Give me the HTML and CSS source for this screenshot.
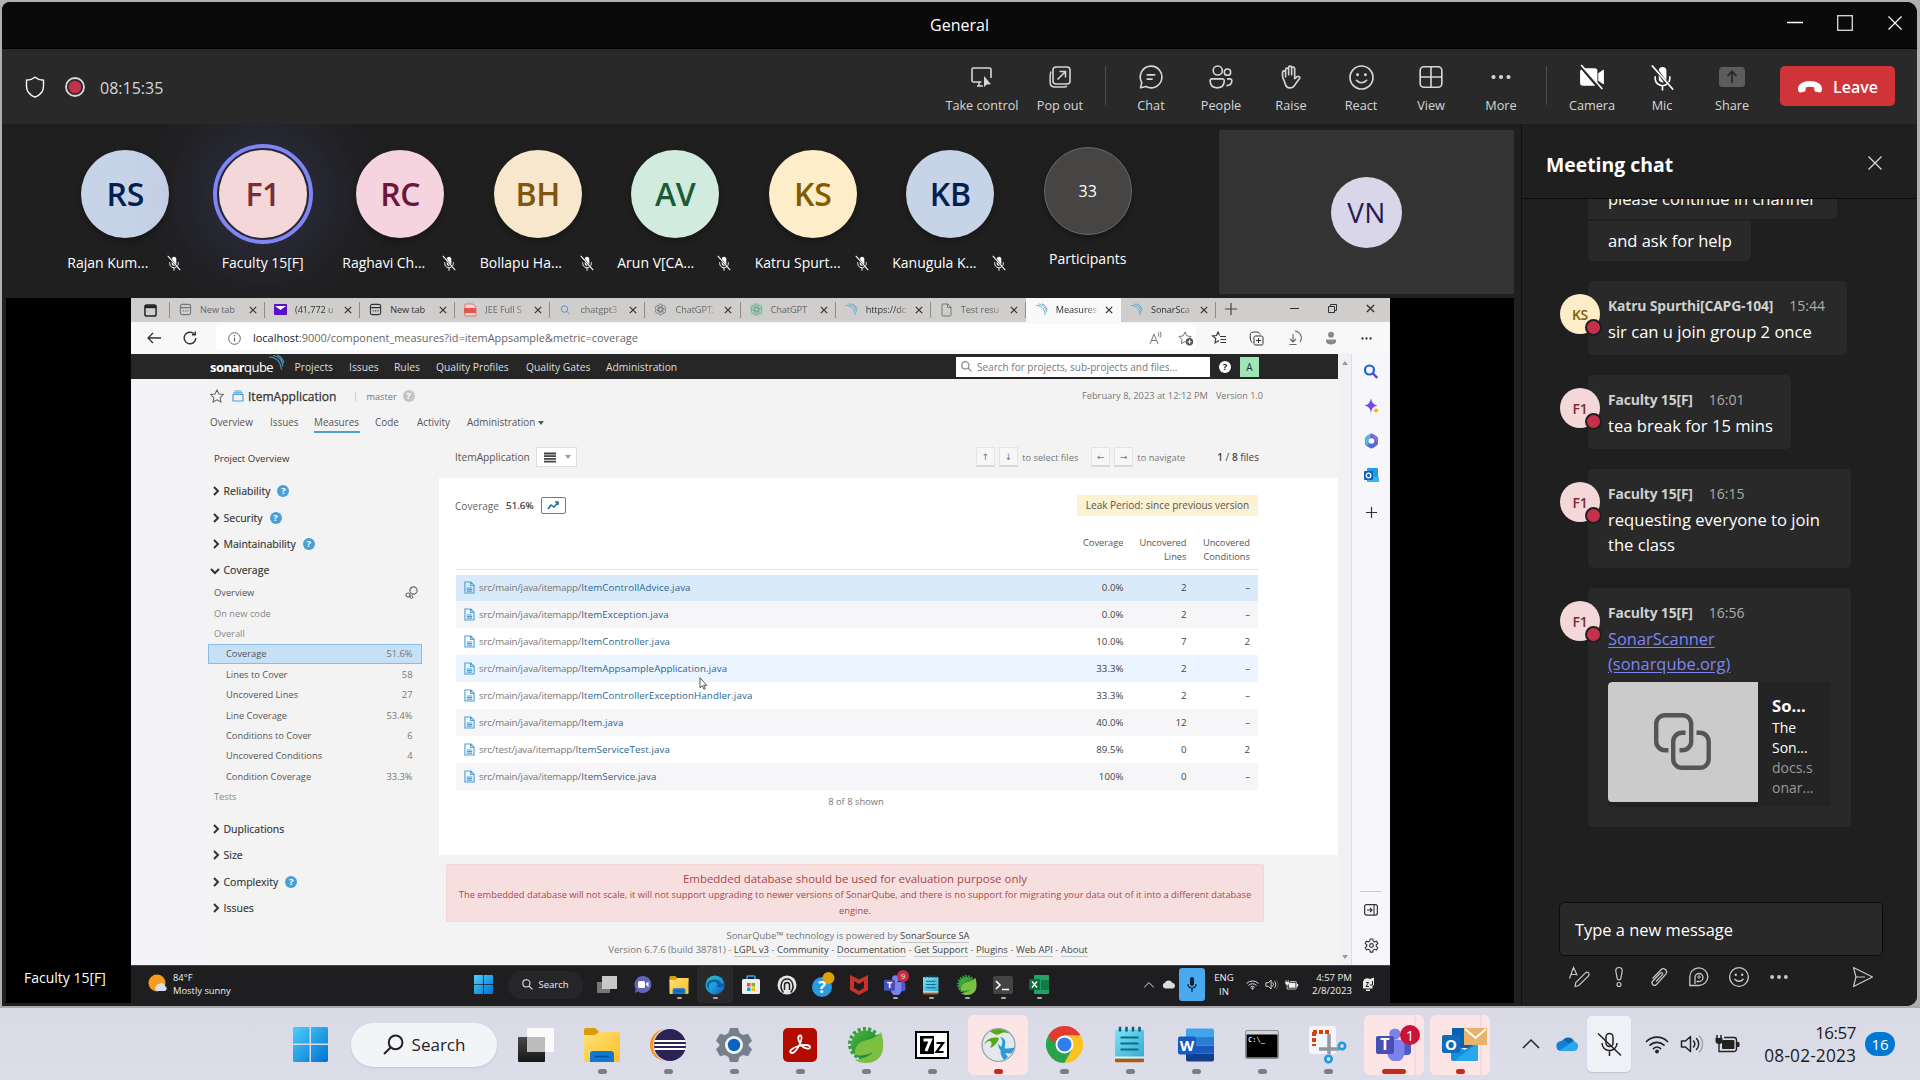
FILE: index.html
```html
<!DOCTYPE html>
<html lang="en">
<head>
<meta charset="utf-8">
<title>General</title>
<link rel="stylesheet" href="styles.css">
</head>
<body>
<svg class="defs" aria-hidden="true">
  <defs>
    <linearGradient id="gWin" x1="0" y1="0" x2="1" y2="1"><stop offset="0" stop-color="#4cd0fb"/><stop offset="1" stop-color="#0070d0"/></linearGradient>
    <linearGradient id="gFold" x1="0" y1="0" x2="1" y2="1"><stop offset="0" stop-color="#ffe07a"/><stop offset="1" stop-color="#fcbf23"/></linearGradient>
    <linearGradient id="gEdge" x1="0" y1="0" x2="1" y2="1"><stop offset="0" stop-color="#37c5a8"/><stop offset=".5" stop-color="#1b9de2"/><stop offset="1" stop-color="#1358b0"/></linearGradient>
    <linearGradient id="gLeaf" x1="0" y1="0" x2="1" y2="1"><stop offset="0" stop-color="#4fb53a"/><stop offset="1" stop-color="#0a7a36"/></linearGradient>
    <linearGradient id="gPad" x1="0" y1="0" x2="1" y2="1"><stop offset="0" stop-color="#7be3f7"/><stop offset="1" stop-color="#35a9cc"/></linearGradient>
    <linearGradient id="gStar" x1="0" y1="0" x2="1" y2="1"><stop offset="0" stop-color="#3d5cf0"/><stop offset="1" stop-color="#a23df0"/></linearGradient>
  </defs>
  <symbol id="i-mic-off" viewBox="0 0 20 20"><path d="M7.2 4.6a2.9 2.9 0 0 1 5.7 0v6.2c0 .5-.1.9-.3 1.2z" fill="currentColor"/><path d="M7.2 8.3v2.6a2.9 2.9 0 0 0 3.7 2.7z" fill="currentColor"/><path d="M4.6 9.5v1.2a5.4 5.4 0 0 0 8.4 4.4M15.4 9.5v1.2c0 .9-.2 1.7-.6 2.4M10 16.2v3" fill="none" stroke="currentColor" stroke-width="1.2" stroke-linecap="round"/><path d="M2.5 1.5l15 17" stroke="currentColor" stroke-width="1.3" stroke-linecap="round"/></symbol>
  <symbol id="i-x" viewBox="0 0 16 16"><path d="M1.5 1.5l13 13M14.5 1.5l-13 13" fill="none" stroke="currentColor" stroke-width="1.2"/></symbol>
  <symbol id="i-cx" viewBox="0 0 8 8"><path d="M.8 .8l6.4 6.4M7.2 .8L.8 7.2" fill="none" stroke="currentColor" stroke-width="1.2"/></symbol>
  <symbol id="i-chev" viewBox="0 0 10 10"><path d="M3 1l4 4-4 4" fill="none" stroke="currentColor" stroke-width="2"/></symbol>
  <symbol id="i-up" viewBox="0 0 20 20"><path d="M2 14l8-8 8 8" fill="none" stroke="currentColor" stroke-width="1.5"/></symbol>
  <symbol id="i-file" viewBox="0 0 12 14"><path d="M1 1h6.5L11 4.5V13H1zM7.2 1v3.8H11M3 7.5h6M3 9.3h6M3 11.1h6" fill="none" stroke="#4b9fd5" stroke-width="1.2"/></symbol>
  <symbol id="i-wave" viewBox="0 0 14 14"><path d="M1 2.5c6 .3 9.5 4 10 10.5M4 1c5 1 8 4.500 8.300 9M7.500 .8c3 1.200 5 3.500 5.500 6.500" fill="none" stroke="#4b9fd5" stroke-width=".9"/></symbol>
  <symbol id="i-page" viewBox="0 0 14 14"><rect x="1.500" y="1.500" width="11" height="11" rx="2" fill="none" stroke="currentColor" stroke-width="1.200"/><path d="M1.500 5h11M4 8.500h1.200M6.500 8.500h1.200M9 8.500h1.200" stroke="currentColor" stroke-width="1.200" fill="none"/></symbol>
  <symbol id="i-gpt" viewBox="0 0 16 16"><g fill="none" stroke="currentColor" stroke-width="1"><path d="M5 4.200v4.500l4 2.300M5 4.200a3 3 0 0 1 5.500-1.600"/><path d="M5 4.200v4.500l4 2.300M5 4.200a3 3 0 0 1 5.500-1.600" transform="rotate(60 8 8)"/><path d="M5 4.200v4.500l4 2.300M5 4.200a3 3 0 0 1 5.500-1.600" transform="rotate(120 8 8)"/><path d="M5 4.200v4.500l4 2.300M5 4.200a3 3 0 0 1 5.500-1.600" transform="rotate(180 8 8)"/><path d="M5 4.200v4.500l4 2.300M5 4.200a3 3 0 0 1 5.500-1.600" transform="rotate(240 8 8)"/><path d="M5 4.200v4.500l4 2.300M5 4.200a3 3 0 0 1 5.500-1.600" transform="rotate(300 8 8)"/></g></symbol>
  <symbol id="i-wifi" viewBox="0 0 24 20"><g fill="none" stroke="currentColor" stroke-width="1.700" stroke-linecap="round"><path d="M1.500 7.500a15 15 0 0 1 21 0"/><path d="M5 11.200a10 10 0 0 1 14 0"/><path d="M8.500 14.600a5 5 0 0 1 7 0"/></g><circle cx="12" cy="17.500" r="1.900" fill="currentColor"/></symbol>
  <symbol id="i-spk" viewBox="0 0 24 20"><path d="M1.500 7v6h4l5 4.500v-15L5.500 7z" fill="none" stroke="currentColor" stroke-width="1.500" stroke-linejoin="round"/><path d="M13.500 7a4.500 4.500 0 0 1 0 6M16.500 4.500a8 8 0 0 1 0 11" fill="none" stroke="currentColor" stroke-width="1.500" stroke-linecap="round"/><path d="M19.500 2a12 12 0 0 1 0 16" fill="none" stroke="currentColor" stroke-width="1.400" stroke-linecap="round" opacity=".3"/></symbol>
  <symbol id="i-bat" viewBox="0 0 26 20"><path d="M2 1v3M6 1v3" stroke="currentColor" stroke-width="1.500"/><path d="M.5 4h7v2.500a3.500 3.500 0 0 1-7 0z" fill="currentColor"/><path d="M4 9v8.500h15a2.500 2.500 0 0 0 2.500-2.500V6A2.500 2.500 0 0 0 19 3.500H9" fill="none" stroke="currentColor" stroke-width="1.400"/><rect x="7" y="6" width="12.500" height="9" rx="1" fill="currentColor"/><path d="M22 8h1.500a1 1 0 0 1 1 1v3a1 1 0 0 1-1 1H22z" fill="currentColor"/></symbol>
  <symbol id="i-cloud" viewBox="0 0 24 16"><path d="M6 15a5 5 0 0 1-1-9.800A7 7 0 0 1 17.500 5 5.200 5.200 0 0 1 19 15z" fill="currentColor"/></symbol>
  <symbol id="i-win" viewBox="0 0 36 36"><path d="M0 1.500A1.500 1.500 0 0 1 1.500 0H17v17H0zM18.500 0h16A1.500 1.500 0 0 1 36 1.500V17H18.500zM0 18.500h17V36H1.500A1.500 1.500 0 0 1 0 34.500zM18.500 18.500H36v16a1.500 1.500 0 0 1-1.500 1.500h-16z" fill="url(#gWin)"/></symbol>
  <symbol id="i-find" viewBox="0 0 20 20"><circle cx="12" cy="8" r="6.500" fill="none" stroke="currentColor" stroke-width="1.900"/><path d="M7.200 12.800L1 19" stroke="currentColor" stroke-width="1.900"/></symbol>
  <symbol id="i-folder" viewBox="0 0 36 34"><path d="M0 2A2 2 0 0 1 2 0h9l4 4h19a2 2 0 0 1 2 2v5H0z" fill="#d99b09"/><path d="M0 7h11l4-3h21v28a2 2 0 0 1-2 2H2a2 2 0 0 1-2-2z" fill="url(#gFold)"/><path d="M6 34V26a3 3 0 0 1 3-3h18a3 3 0 0 1 3 3v8z" fill="#0f78d4"/><path d="M11 28.500h14" stroke="#0a4f96" stroke-width="1.500"/></symbol>
  <symbol id="i-spring" viewBox="0 0 36 36"><circle cx="17" cy="17" r="15" fill="none" stroke="#2f9f42" stroke-width="4" stroke-dasharray="3 2.240"/><circle cx="17.500" cy="18" r="14.500" fill="url(#gLeaf)"/><path d="M33 5c3.500 10 3 21-2 26-7 7-18 6-24 2 6-1 14-3 18-8-5 3-12 4-18 3-1-8 4-13 10-14.500C24 12 29 10 33 5z" fill="#7cc043"/></symbol>
  <symbol id="i-note" viewBox="0 0 30 36"><rect x="0" y="31" width="29" height="5" rx="1.500" fill="#b5560f"/><rect x="0" y="3" width="29" height="29" rx="2" fill="url(#gPad)"/><path d="M0 30h29v2H0z" fill="#fff" opacity=".8"/><path d="M5.500 11h18M5.500 17h18M5.500 23h18" stroke="#0c6b8e" stroke-width="2"/><path d="M5 0v5M11.500 0v5M18 0v5M24.500 0v5" stroke="#0c5a7c" stroke-width="2.500"/></symbol>
  <symbol id="i-teams" viewBox="0 0 38 34"><circle cx="20" cy="6" r="6" fill="#7b83eb"/><rect x="24" y="12" width="13" height="16" rx="4" fill="#5059c9"/><path d="M12 12h18v13a9 9 0 0 1-18 2z" fill="#7b83eb"/><rect x="0" y="8" width="19" height="19" rx="2" fill="#464eb8"/></symbol>
  <symbol id="i-smile" viewBox="0 0 24 24"><circle cx="12" cy="12" r="10.200" fill="none" stroke="currentColor" stroke-width="1.500"/><circle cx="8.500" cy="9.500" r="1.300" fill="currentColor"/><circle cx="15.500" cy="9.500" r="1.300" fill="currentColor"/><path d="M7.500 14.500c2.300 2.900 6.700 2.900 9 0" fill="none" stroke="currentColor" stroke-width="1.500" stroke-linecap="round"/></symbol>
  <symbol id="i-dots" viewBox="0 0 24 24"><circle cx="4.500" cy="12" r="2.100" fill="currentColor"/><circle cx="12" cy="12" r="2.100" fill="currentColor"/><circle cx="19.500" cy="12" r="2.100" fill="currentColor"/></symbol>
</svg>

<div class="window">
  <header class="titlebar">
    <span class="title">General</span>
    <div class="winbtns">
      <svg width="16" height="16"><path d="M0 7.500h16" stroke="#fff" stroke-width="1.300"/></svg>
      <svg width="16" height="16"><rect x=".7" y=".7" width="14.600" height="14.600" fill="none" stroke="#ddd" stroke-width="1.300"/></svg>
      <svg width="16" height="16"><use href="#i-x"/></svg>
    </div>
  </header>

  <div class="toolbar">
    <div class="status">
      <svg width="20" height="22" viewBox="0 0 20 22"><path d="M10 1.200c2.400 1.900 5 2.800 8.500 3v6c0 5-3 8.700-8.500 11-5.500-2.300-8.500-6-8.500-11v-6c3.500-.2 6.100-1.100 8.500-3z" fill="none" stroke="#fff" stroke-width="1.400"/></svg>
      <svg class="rec" width="20" height="20"><circle cx="10" cy="10" r="9" fill="none" stroke="#d8d8d8" stroke-width="1.800"/><circle cx="10" cy="10" r="6.300" fill="#c4314b"/></svg>
      <span class="timer">08:15:35</span>
    </div>
    <div class="actions">
      <div class="act take"><svg width="24" height="24" viewBox="0 0 24 24"><path d="M11.500 17H3.500A1.500 1.500 0 0 1 2 15.500v-11A1.500 1.500 0 0 1 3.500 3h16A1.500 1.500 0 0 1 21 4.500V13M7 21h6M9 17v4" fill="none" stroke="currentColor" stroke-width="1.600"/><path d="M14 11v11l2.800-2.600 4.200-.2z" fill="currentColor"/></svg><span>Take control</span></div>
      <div class="act pop"><svg width="24" height="24" viewBox="0 0 24 24"><rect x="5" y="2" width="17" height="17" rx="3" fill="none" stroke="currentColor" stroke-width="1.600"/><path d="M3 6.500C1.800 9 2 18 2.500 19.500s2 2.500 4 2.500h9.500c1.500 0 2.500-.5 3-1" fill="none" stroke="currentColor" stroke-width="1.500"/><path d="M9.500 14.500l8-8M11.500 6.500h6v6" fill="none" stroke="currentColor" stroke-width="1.600"/></svg><span>Pop out</span></div>
      <i class="sep"></i>
      <div class="act"><svg width="26" height="26" viewBox="0 0 24 24"><path d="M12 2a10 10 0 1 1-4.700 18.800L2.300 22l1.200-4.900A10 10 0 0 1 12 2z" fill="none" stroke="currentColor" stroke-width="1.500" stroke-linejoin="round"/><path d="M8.500 10h7M8.500 14h4.500" stroke="currentColor" stroke-width="1.500" stroke-linecap="round"/></svg><span>Chat</span></div>
      <div class="act"><svg width="26" height="26" viewBox="0 0 24 24"><g fill="none" stroke="currentColor" stroke-width="1.500"><circle cx="9" cy="6" r="4.200"/><circle cx="18" cy="7.500" r="2.900"/><path d="M2 15.500A1.800 1.800 0 0 1 3.800 13.700h9.400a1.800 1.800 0 0 1 1.800 1.800c0 4-2.500 6.500-6.500 6.500S2 19.500 2 15.500z"/><path d="M17.500 13.700h2.700a1.800 1.800 0 0 1 1.800 1.800c0 3-1.800 4.500-5 4.500"/></g></svg><span>People</span></div>
      <div class="act"><svg width="26" height="26" viewBox="0 0 24 24"><path d="M7 12.500V5.200a1.400 1.400 0 0 1 2.800 0V10 3.400a1.400 1.400 0 0 1 2.800 0V10 4.200a1.400 1.400 0 0 1 2.800 0v9.300l2.300-1.800c1.200-.8 2.800.3 2.400 1.300-.3.700-3 3.800-4 5.500-1.200 2.200-2.200 3.500-5.100 3.500-3 0-4-2-4.600-4.500C5.900 15.500 4.200 13 4.200 11V7.800a1.400 1.400 0 0 1 2.800 0" fill="none" stroke="currentColor" stroke-width="1.500" stroke-linejoin="round"/></svg><span>Raise</span></div>
      <div class="act"><svg width="27" height="27"><use href="#i-smile"/></svg><span>React</span></div>
      <div class="act"><svg width="26" height="26" viewBox="0 0 24 24"><rect x="2" y="2.500" width="20" height="19" rx="3.500" fill="none" stroke="currentColor" stroke-width="1.500"/><path d="M12 2.500v19M2 12h20" stroke="currentColor" stroke-width="1.500"/></svg><span>View</span></div>
      <div class="act"><svg width="24" height="24"><use href="#i-dots"/></svg><span>More</span></div>
      <i class="sep sep2"></i>
      <div class="act on"><svg width="26" height="26" viewBox="0 0 24 24"><path d="M5 4h9.500A2.500 2.500 0 0 1 17 6.500v11zM17.800 8.500L22 5.500c.5-.3 1 0 1 .5v12c0 .5-.5.8-1 .5l-4.200-3zM2.200 5l12.800 15H3.500A2.500 2.500 0 0 1 1 17.500v-11A2.500 2.500 0 0 1 2.200 5z" fill="currentColor"/><path d="M2 1l19.500 22" stroke="currentColor" stroke-width="1.500"/></svg><span>Camera</span></div>
      <div class="act on"><svg width="27" height="27"><use href="#i-mic-off"/></svg><span>Mic</span></div>
      <div class="act share"><svg width="26" height="22" viewBox="0 0 26 22"><rect x="0" y="1" width="26" height="20" rx="3.500" fill="#5c5c5c"/><path d="M13 17V5.500M8.500 10L13 5.500l4.500 4.500" fill="none" stroke="#292929" stroke-width="1.800"/></svg><span>Share</span></div>
      <div class="leave"><svg width="24" height="12" viewBox="0 0 24 12"><path d="M12 0C5 0 0 3.500 0 7.500 0 10 .8 11.500 2.500 11.500l3.500-.8c1.200-.3 1.500-1 1.600-2L8 6.300c2.500-.8 5.500-.8 8 0l.4 2.400c.1 1 .4 1.700 1.600 2l3.500.8C23.200 11.500 24 10 24 7.500 24 3.500 19 0 12 0z" fill="#fff"/></svg><b>Leave</b></div>
    </div>
  </div>

  <div class="content">
    <main class="left">
      <div class="roster">
        <div class="person"><div class="av blue">RS</div><div class="nm"><span>Rajan Kum...</span><svg width="16" height="18"><use href="#i-mic-off"/></svg></div></div>
        <div class="person speaking"><div class="av rose">F1</div><div class="nm"><span>Faculty 15[F]</span></div></div>
        <div class="person"><div class="av pink">RC</div><div class="nm"><span>Raghavi Ch...</span><svg width="16" height="18"><use href="#i-mic-off"/></svg></div></div>
        <div class="person"><div class="av sand">BH</div><div class="nm"><span>Bollapu Ha...</span><svg width="16" height="18"><use href="#i-mic-off"/></svg></div></div>
        <div class="person"><div class="av mint">AV</div><div class="nm"><span>Arun V[CA...</span><svg width="16" height="18"><use href="#i-mic-off"/></svg></div></div>
        <div class="person"><div class="av gold">KS</div><div class="nm"><span>Katru Spurt...</span><svg width="16" height="18"><use href="#i-mic-off"/></svg></div></div>
        <div class="person"><div class="av blue">KB</div><div class="nm"><span>Kanugula K...</span><svg width="16" height="18"><use href="#i-mic-off"/></svg></div></div>
        <div class="person more"><div class="av">33</div><div class="nm"><span>Participants</span></div></div>
        <div class="self"><div class="vn">VN</div></div>
      </div>

      <div class="stage">
        <div class="sharer">Faculty 15[F]</div>
        <div class="screen">
          <div class="tabs">
            <div class="tabmenu"><svg width="13" height="13" viewBox="0 0 14 14"><rect x="1" y="1" width="12" height="12" rx="2" fill="none" stroke="#222" stroke-width="1.600"/><path d="M1 3h12" stroke="#222" stroke-width="3"/></svg></div>
            <div class="tab dim"><svg width="13" height="13"><use href="#i-page"/></svg><span>New tab</span><svg class="cx" width="8" height="8"><use href="#i-cx"/></svg></div>
            <div class="tab"><svg width="13" height="13" viewBox="0 0 13 13"><rect y="1" width="13" height="11" rx="1" fill="#5a10c8"/><path d="M1 3l5.500 4L12 3" fill="#fff"/></svg><span class="fade">(41,772 u</span><svg class="cx" width="8" height="8"><use href="#i-cx"/></svg></div>
            <div class="tab"><svg width="13" height="13"><use href="#i-page"/></svg><span>New tab</span><svg class="cx" width="8" height="8"><use href="#i-cx"/></svg></div>
            <div class="tab dim"><svg width="13" height="14" viewBox="0 0 13 14"><path d="M1 1h8l3 3v9H1z" fill="#f6d4d0" stroke="#e0746c"/><rect x="0" y="5" width="12" height="5" fill="#e2574c"/></svg><span class="fade">JEE Full S</span><svg class="cx" width="8" height="8"><use href="#i-cx"/></svg></div>
            <div class="tab dim"><svg width="10" height="10" viewBox="0 0 20 20" class="bing"><g transform="matrix(-1 0 0 1 20 0)"><use href="#i-find"/></g></svg><span class="fade">chatgpt3</span><svg class="cx" width="8" height="8"><use href="#i-cx"/></svg></div>
            <div class="tab dim"><svg width="13" height="13"><use href="#i-gpt"/></svg><span class="fade">ChatGPT:</span><svg class="cx" width="8" height="8"><use href="#i-cx"/></svg></div>
            <div class="tab dim green"><svg width="13" height="13"><rect width="13" height="13" rx="2" fill="#b5cfc4"/><use href="#i-gpt"/></svg><span>ChatGPT</span><svg class="cx" width="8" height="8"><use href="#i-cx"/></svg></div>
            <div class="tab"><svg width="13" height="13"><use href="#i-wave"/></svg><span class="fade">https://dc</span><svg class="cx" width="8" height="8"><use href="#i-cx"/></svg></div>
            <div class="tab dim"><svg width="11" height="14" viewBox="0 0 11 14"><path d="M1 2a1 1 0 0 1 1-1h5l3 3v8a1 1 0 0 1-1 1H2a1 1 0 0 1-1-1zM6.500 1v3.500H10" fill="none" stroke="#777"/></svg><span class="fade">Test resu</span><svg class="cx" width="8" height="8"><use href="#i-cx"/></svg></div>
            <div class="tab active"><svg width="13" height="13"><use href="#i-wave"/></svg><span class="fade">Measures</span><svg class="cx" width="8" height="8"><use href="#i-cx"/></svg></div>
            <div class="tab last"><svg width="13" height="13"><use href="#i-wave"/></svg><span class="fade">SonarSca</span><svg class="cx" width="8" height="8"><use href="#i-cx"/></svg></div>
            <svg class="newtab" width="12" height="12"><path d="M6 0v12M0 6h12" stroke="#444" stroke-width="1.200"/></svg>
            <div class="bwin">
              <svg width="9" height="9"><path d="M0 4.500h9" stroke="#333"/></svg>
              <svg width="9" height="9"><path d="M.5 2.500h6v6h-6zM2.500 2V.5h6v6H7" fill="none" stroke="#333"/></svg>
              <svg width="9" height="9"><use href="#i-cx"/></svg>
            </div>
          </div>
          <div class="addr">
            <svg class="back" width="14" height="12" viewBox="0 0 14 12"><path d="M14 6H1M6 1L1 6l5 5" fill="none" stroke="#333" stroke-width="1.300"/></svg>
            <svg class="reload" width="14" height="14" viewBox="0 0 14 14"><path d="M12.800 7A5.800 5.800 0 1 1 11 2.800M12.300.5v3.300H9" fill="none" stroke="#333" stroke-width="1.400"/></svg>
            <div class="url"><svg width="13" height="13" viewBox="0 0 13 13"><circle cx="6.500" cy="6.500" r="5.800" fill="none" stroke="#666"/><path d="M6.500 5.500v4M6.500 3v1.300" stroke="#666" stroke-width="1.200"/></svg><span><b>localhost</b>:9000/component_measures?id=itemAppsample&amp;metric=coverage</span>
              <svg class="read" width="14" height="14" viewBox="0 0 14 14"><path d="M1 13L5 3l4 10M2.500 9.500h5M9 1.500a3 3 0 0 1 0 4M11 .5a5 5 0 0 1 0 6" fill="none" stroke="#777"/></svg>
              <svg width="16" height="15" viewBox="0 0 16 15"><path d="M7 1l1.800 3.900 4.200.6-3 3 .7 4.200L7 10.700l-3.700 2 .7-4.200-3-3 4.200-.6z" fill="none" stroke="#777"/><circle cx="11.500" cy="10.800" r="3.700" fill="#555"/><path d="M11.500 8.800v4M9.500 10.800h4" stroke="#fff"/></svg>
            </div>
            <div class="tools">
              <svg width="15" height="14" viewBox="0 0 15 14"><path d="M8 9.500L4 12l.8-4.500L1.500 5l4-.5L7 1l1.500 3.500M9 5.500h6M9.500 8.500H15M9.500 11.500H15" fill="none" stroke="#333" stroke-width="1.100"/></svg>
              <svg width="15" height="15" viewBox="0 0 15 15"><rect x="5" y="5" width="9" height="9" rx="1.500" fill="none" stroke="#333"/><path d="M9.500 7v5M7 9.500h5M3 11.500C.8 10 1 4 1.500 2.500S6 .8 8 1s2.500.8 3 2.500" fill="none" stroke="#333"/></svg>
              <svg width="16" height="16" viewBox="0 0 16 16"><path d="M6 4v8M3 9l3 3 3-3M2.500 14.500h7M8 1a7 7 0 0 1 5 11" fill="none" stroke="#666" stroke-width="1.100"/></svg>
              <svg width="12" height="14" viewBox="0 0 12 14"><circle cx="6" cy="3.800" r="3" fill="#8a8a8a"/><path d="M1 8.500h10v2c0 4-10 4-10 0z" fill="#8a8a8a"/></svg>
              <svg width="13" height="13"><use href="#i-dots"/></svg>
            </div>
          </div>
          <div class="browser">
            <div class="page">
              <nav class="snav">
                <div class="logo"><b>sonar</b>qube<svg width="17" height="17"><use href="#i-wave"/></svg></div>
                <a class="n1">Projects</a><a class="n2">Issues</a><a class="n3">Rules</a><a class="n4">Quality Profiles</a><a class="n5">Quality Gates</a><a>Administration</a>
                <div class="find"><svg width="11" height="11" viewBox="0 0 20 20"><g transform="matrix(-1 0 0 1 20 0)"><use href="#i-find"/></g></svg>Search for projects, sub-projects and files...</div>
                <i class="q w">?</i><i class="usr">A</i>
              </nav>
              <div class="phead">
                <div class="prow">
                  <svg width="14" height="14" viewBox="0 0 16 16"><path d="M8 1l2.200 4.600 5 .7-3.600 3.500.9 5L8 12.400l-4.500 2.400.9-5L.8 6.300l5-.7z" fill="none" stroke="#666" stroke-width="1.200"/></svg>
                  <svg class="pic" width="12" height="12" viewBox="0 0 12 12"><path d="M1 4.500h10v6.500H1zM1.500 2.800h9M2.500 1h7" fill="none" stroke="#4b9fd5" stroke-width="1.200"/></svg>
                  <b class="pname">ItemApplication</b><i class="br"></i><span class="master">master</span><i class="q g">?</i>
                  <span class="date">February 8, 2023 at 12:12 PM</span><span class="ver">Version 1.0</span>
                </div>
                <div class="ptabs"><a class="t1">Overview</a><a class="t2">Issues</a><a class="t3 cur">Measures</a><a class="t4">Code</a><a class="t5">Activity</a><a>Administration<i class="car"></i></a></div>
              </div>
              <div class="cols">
                <aside class="side">
                  <div class="po">Project Overview</div>
                  <div class="facet"><svg width="10" height="10"><use href="#i-chev"/></svg>Reliability<i class="q">?</i></div>
                  <div class="facet"><svg width="10" height="10"><use href="#i-chev"/></svg>Security<i class="q">?</i></div>
                  <div class="facet"><svg width="10" height="10"><use href="#i-chev"/></svg>Maintainability<i class="q">?</i></div>
                  <div class="facet open"><svg width="10" height="10"><use href="#i-chev"/></svg>Coverage</div>
                  <div class="it top">Overview<svg width="13" height="13" viewBox="0 0 13 13"><circle cx="8.500" cy="4.500" r="3.600" fill="none" stroke="#666" stroke-width="1.200"/><circle cx="3" cy="9" r="2" fill="none" stroke="#666" stroke-width="1.200"/><circle cx="6.500" cy="11" r="1.400" fill="none" stroke="#666"/></svg></div>
                  <div class="it gr">On new code</div>
                  <div class="it gr">Overall</div>
                  <div class="it sub sel">Coverage<span>51.6%</span></div>
                  <div class="it sub">Lines to Cover<span>58</span></div>
                  <div class="it sub">Uncovered Lines<span>27</span></div>
                  <div class="it sub">Line Coverage<span>53.4%</span></div>
                  <div class="it sub">Conditions to Cover<span>6</span></div>
                  <div class="it sub">Uncovered Conditions<span>4</span></div>
                  <div class="it sub">Condition Coverage<span>33.3%</span></div>
                  <div class="it gr last">Tests</div>
                  <div class="facet"><svg width="10" height="10"><use href="#i-chev"/></svg>Duplications</div>
                  <div class="facet"><svg width="10" height="10"><use href="#i-chev"/></svg>Size</div>
                  <div class="facet"><svg width="10" height="10"><use href="#i-chev"/></svg>Complexity<i class="q">?</i></div>
                  <div class="facet"><svg width="10" height="10"><use href="#i-chev"/></svg>Issues</div>
                </aside>
                <section class="main">
                  <div class="mbar"><span class="mname">ItemApplication</span><div class="dd"><svg width="12" height="11"><path d="M0 1.500h12M0 4.200h12M0 6.900h12M0 9.600h12" stroke="#444" stroke-width="1.800"/></svg><i class="car"></i></div>
                    <div class="keys"><kbd>↑</kbd><kbd>↓</kbd><span class="k1">to select files</span><kbd>←</kbd><kbd>→</kbd><span class="k2">to navigate</span><span class="cnt"><b>1</b> / <b>8</b> files</span></div></div>
                  <div class="panel">
                    <div class="prow1"><span>Coverage</span><b>51.6%</b><div class="gbtn"><svg width="12" height="9" viewBox="0 0 12 9"><path d="M1 8l3-4 3 2 4-4.500M8 1h3v3" fill="none" stroke="#236a97" stroke-width="1.500"/></svg></div><div class="leak">Leak Period: since previous version</div></div>
                    <div class="thead"><span></span><span>Coverage</span><span>Uncovered<br>Lines</span><span>Uncovered<br>Conditions</span></div>
                    <div class="rows">
                      <div class="r sel"><div><svg width="11" height="13"><use href="#i-file"/></svg><span>src/main/java/itemapp/<b>ItemControllAdvice.java</b></span></div><span>0.0%</span><span>2</span><span>–</span></div>
                      <div class="r alt"><div><svg width="11" height="13"><use href="#i-file"/></svg><span>src/main/java/itemapp/<b>ItemException.java</b></span></div><span>0.0%</span><span>2</span><span>–</span></div>
                      <div class="r"><div><svg width="11" height="13"><use href="#i-file"/></svg><span>src/main/java/itemapp/<b>ItemController.java</b></span></div><span>10.0%</span><span>7</span><span>2</span></div>
                      <div class="r hov"><div><svg width="11" height="13"><use href="#i-file"/></svg><span>src/main/java/itemapp/<b>ItemAppsampleApplication.java</b></span></div><span>33.3%</span><span>2</span><span>–</span>
                        <svg class="cursor" width="9" height="13" viewBox="0 0 9 13"><path d="M1 .8v10l2.300-2 1.700 3.500 1.300-.7-1.600-3.300h3z" fill="#fff" stroke="#444" stroke-width=".9"/></svg></div>
                      <div class="r"><div><svg width="11" height="13"><use href="#i-file"/></svg><span>src/main/java/itemapp/<b>ItemControllerExceptionHandler.java</b></span></div><span>33.3%</span><span>2</span><span>–</span></div>
                      <div class="r alt"><div><svg width="11" height="13"><use href="#i-file"/></svg><span>src/main/java/itemapp/<b>Item.java</b></span></div><span>40.0%</span><span>12</span><span>–</span></div>
                      <div class="r"><div><svg width="11" height="13"><use href="#i-file"/></svg><span>src/test/java/itemapp/<b>ItemServiceTest.java</b></span></div><span>89.5%</span><span>0</span><span>2</span></div>
                      <div class="r alt"><div><svg width="11" height="13"><use href="#i-file"/></svg><span>src/main/java/itemapp/<b>ItemService.java</b></span></div><span>100%</span><span>0</span><span>–</span></div>
                    </div>
                    <div class="shown">8 of 8 shown</div>
                  </div>
                  <div class="warn"><div class="w1">Embedded database should be used for evaluation purpose only</div><div>The embedded database will not scale, it will not support upgrading to newer versions of SonarQube, and there is no support for migrating your data out of it into a different database</div><div>engine.</div></div>
                  <div class="foot"><div>SonarQube™ technology is powered by <u>SonarSource SA</u></div><div class="f2">Version 6.7.6 (build 38781) - <u>LGPL v3</u> - <u>Community</u> - <u>Documentation</u> - <u>Get Support</u> - <u>Plugins</u> - <u>Web API</u> - <u>About</u></div></div>
                </section>
              </div>
            </div>
            <div class="scroll"><i class="su"></i><i class="sd"></i></div>
            <div class="rail">
              <svg width="14" height="15" viewBox="0 0 14 15"><circle cx="5.500" cy="6" r="4.500" fill="none" stroke="#1d62d8" stroke-width="2.200"/><path d="M9 9.500l4.300 4.500" stroke="#5b3fd8" stroke-width="2.400"/></svg>
              <svg width="15" height="16" viewBox="0 0 15 16"><path d="M7 0c.8 4.500 2 6.300 6.500 7.500C9 8.700 7.800 10.500 7 15 6.200 10.500 5 8.700.5 7.500 5 6.300 6.200 4.500 7 0z" fill="url(#gStar)"/><path d="M12 9.500l.9 2.100 2.100.9-2.100.9-.9 2.100-.9-2.100-2.100-.9 2.100-.9z" fill="#f6a800"/></svg>
              <svg width="15" height="16" viewBox="0 0 15 16"><path d="M5.500 1.200a4 4 0 0 1 4 0l3 2A4 4 0 0 1 14 6.500v3.200a4 4 0 0 1-1.800 3.300l-2.700 1.800a4 4 0 0 1-4 0l-2.700-1.800A4 4 0 0 1 1 9.700V6.500a4 4 0 0 1 1.500-3.300z" fill="#5468d8"/><path d="M8 .7l4.500 2.500A4 4 0 0 1 14 6.500v3L9 5z" fill="#9a63dc"/><path d="M2.500 3.200L7 .7 5.500 8 4 12l-2-.5C1.200 9.500 1 8 1 6.500a4 4 0 0 1 1.500-3.300z" fill="#55b4e8"/><circle cx="7.500" cy="8" r="2.800" fill="#fff"/></svg>
              <svg width="15" height="15" viewBox="0 0 15 15"><rect x="3" y="0" width="11" height="14" rx="1" fill="#1e9be6"/><path d="M3 9h12v5H4z" fill="#35b8f1"/><rect x="0" y="3" width="9" height="9" rx="1" fill="#0a64c0"/><circle cx="4.500" cy="7.500" r="2.300" fill="none" stroke="#fff" stroke-width="1.300"/></svg>
              <svg class="plus" width="11" height="11"><path d="M5.500 0v11M0 5.500h11" stroke="#333" stroke-width="1.200"/></svg>
              <i class="rl"></i>
              <svg class="pn" width="14" height="12" viewBox="0 0 14 12"><rect x=".6" y=".6" width="12.800" height="10.500" rx="2" fill="none" stroke="#333" stroke-width="1.200"/><path d="M10 1v10M3 6h4.500M6 4l2 2-2 2" fill="none" stroke="#333" stroke-width="1.100"/></svg>
              <svg class="gear" width="15" height="15" viewBox="0 0 24 24"><path d="M10 1.500h4l.7 3.300 2.200 1.300 3.200-1 2 3.500-2.500 2.200v2.500l2.500 2.200-2 3.500-3.200-1-2.200 1.300-.7 3.200h-4l-.7-3.200-2.200-1.300-3.200 1-2-3.500 2.500-2.200v-2.500L1.900 8.600l2-3.500 3.200 1 2.200-1.300z" fill="none" stroke="#333" stroke-width="1.800"/><circle cx="12" cy="12" r="3" fill="none" stroke="#333" stroke-width="1.800"/></svg>
            </div>
          </div>
          <div class="stask">
            <div class="weather"><svg width="20" height="22" viewBox="0 0 20 22"><circle cx="9" cy="10" r="8.500" fill="#f79c1c"/><path d="M9 18a3.500 3.500 0 0 1 1-6.500 4 4 0 0 1 7 1.500 2.700 2.700 0 0 1 0 5z" fill="#d5e0f4"/></svg><div>84°F<br>Mostly sunny</div></div>
            <div class="s"><svg width="19" height="19"><use href="#i-win"/></svg></div>
            <div class="sfind"><svg width="11" height="11" viewBox="0 0 20 20"><g transform="matrix(-1 0 0 1 20 0)"><use href="#i-find"/></g></svg>Search</div>
            <div class="s"><svg width="20" height="18"><rect x="0" y="6" width="13" height="11" fill="#777"/><rect x="5" y="0" width="15" height="13" fill="#c8c8c8"/></svg></div>
            <div class="s"><svg width="18" height="19"><path d="M9 1a8.500 8.500 0 1 1-5 15.500L1 18l.8-4A8.500 8.500 0 0 1 9 1z" fill="#6066b5"/><rect x="4" y="6" width="7" height="7" rx="1.500" fill="#fff"/><path d="M11.500 9l3-2.500v6z" fill="#fff"/></svg></div>
            <div class="s run"><svg width="20" height="18"><use href="#i-folder"/></svg></div>
            <div class="s run edge"><svg width="20" height="20" viewBox="0 0 20 20"><circle cx="10" cy="10" r="9.500" fill="url(#gEdge)"/><path d="M19 9c0 4-5 4-7 2.500C13.500 9 11.500 6.500 8 7c-4 .8-5.500 5-3 9C-1 10 2 5 8 4.500c5-.3 8 2 8 4z" fill="#0f4f9c" opacity=".75"/></svg></div>
            <div class="s"><svg width="18" height="19" viewBox="0 0 18 19"><path d="M5 5V2a1 1 0 0 1 1-1h6a1 1 0 0 1 1 1v3" fill="none" stroke="#3aa5e8" stroke-width="1.500"/><rect y="4" width="18" height="15" rx="1.500" fill="#eee"/><path d="M5 8h3.500v3.500H5z" fill="#f25022"/><path d="M9.500 8H13v3.500H9.500z" fill="#7fba00"/><path d="M5 12.500h3.500V16H5z" fill="#00a4ef"/><path d="M9.500 12.500H13V16H9.500z" fill="#ffb900"/></svg></div>
            <div class="s"><svg width="20" height="20"><circle cx="10" cy="10" r="9.500" fill="#e6e6e6"/><path d="M6.500 17.500C2 13 4 4 10 4s8 9 3.500 13.500M7.500 15V10a2.500 2.500 0 0 1 5 0v5" fill="none" stroke="#222" stroke-width="1.500"/></svg></div>
            <div class="s"><svg width="24" height="26" viewBox="0 0 24 26"><circle cx="11" cy="15" r="10" fill="#2a9be0"/><circle cx="17.500" cy="6" r="6" fill="#e0a106"/><text x="11" y="21" class="svg-letter">?</text></svg></div>
            <div class="s"><svg width="18" height="21"><path d="M0 1l9 4.500L18 1v15l-9 5-9-5zM4 7v7l5 3 5-3V7l-5 3z" fill="#c8322b" fill-rule="evenodd"/></svg></div>
            <div class="s run tm"><svg width="22" height="20"><use href="#i-teams"/><text x="5.600" y="13" class="svg-letter sm">T</text></svg><i class="b9">9</i></div>
            <div class="s run"><svg width="16" height="20"><use href="#i-note"/></svg></div>
            <div class="s run"><svg width="20" height="20"><use href="#i-spring"/></svg></div>
            <div class="s run"><svg width="20" height="18"><rect width="20" height="18" rx="2" fill="#444"/><path d="M3 5l4 4-4 4M9 13.500h7" fill="none" stroke="#fff" stroke-width="1.600"/></svg></div>
            <div class="s run"><svg width="20" height="19"><rect x="5" width="15" height="19" rx="1" fill="#21a366"/><path d="M12 5h8v10h-8z" fill="#107c41"/><rect y="4" width="11" height="11" rx="1" fill="#0e6b38"/><path d="M3 6.500l5 6M8 6.500l-5 6" stroke="#fff" stroke-width="1.400"/></svg></div>
            <div class="stray">
              <svg width="12" height="20"><use href="#i-up"/></svg>
              <svg class="c" width="14" height="11"><use href="#i-cloud"/></svg>
              <div class="smic"><svg width="10" height="16" viewBox="0 0 10 16"><rect x="3" y="0" width="4" height="9" rx="2" fill="#123"/><path d="M1 7c0 5.300 8 5.300 8 0M5 11v4" fill="none" stroke="#123" stroke-width="1.200"/></svg></div>
              <div class="lang">ENG<br>IN</div>
              <svg class="sw" width="13" height="13"><use href="#i-wifi"/></svg>
              <svg class="sw" width="14" height="13"><use href="#i-spk"/></svg>
              <svg class="sw" width="14" height="14"><use href="#i-bat"/></svg>
              <div class="stime">4:57 PM<br>2/8/2023</div>
              <svg class="bell" width="12" height="16" viewBox="0 0 12 16"><path d="M1 11.500V5a4.500 4.500 0 0 1 7-3l4-1.500V8l-1.500 1v2.500zM4 12.500h4V14H4z" fill="#e8e8e8"/><path d="M4 5.500h2.500L4 9.500h3M8 8h2.500V4" fill="none" stroke="#222"/></svg>
            </div>
          </div>
        </div>
      </div>
    </main>

    <aside class="chat">
      <div class="chead"><b>Meeting chat</b><svg width="16" height="16"><use href="#i-x"/></svg></div>
      <div class="msgs">
        <div class="bub plain first">please continue in channel</div>
        <div class="bub plain second">and ask for help</div>
        <div class="msg"><div class="mav gold">KS<i></i></div><div class="bub b1"><div class="who"><b>Katru Spurthi[CAPG-104]</b><span>15:44</span></div><p>sir can u join group 2 once</p></div></div>
        <div class="msg"><div class="mav rose">F1<i></i></div><div class="bub b2"><div class="who"><b>Faculty 15[F]</b><span>16:01</span></div><p>tea break for 15 mins</p></div></div>
        <div class="msg"><div class="mav rose">F1<i></i></div><div class="bub b3"><div class="who"><b>Faculty 15[F]</b><span>16:15</span></div><p>requesting everyone to join<br>the class</p></div></div>
        <div class="msg"><div class="mav rose">F1<i></i></div><div class="bub b3"><div class="who"><b>Faculty 15[F]</b><span>16:56</span></div><p class="lnk"><u>SonarScanner</u><br><u>(sonarqube.org)</u></p>
          <div class="card"><div class="thumb"><svg width="58" height="58" viewBox="0 0 58 58"><g fill="none" stroke="#555" stroke-width="4.400"><path d="M14.500 37.200H11a8.800 8.800 0 0 1-8.800-8.800V11A8.800 8.800 0 0 1 11 2.200h17.400A8.800 8.800 0 0 1 37.200 11v17.400a8.800 8.800 0 0 1-8.800 8.800H25.500"/><path d="M31.500 19.800H28a8.800 8.800 0 0 0-8.800 8.800V46a8.800 8.800 0 0 0 8.800 8.800h17.900A8.800 8.800 0 0 0 54.700 46V28.600a8.800 8.800 0 0 0-8.800-8.800H42.500"/></g></svg></div><div class="ctext"><b>So...</b><span>The</span><span>Son...</span><em>docs.s</em><em>onar...</em></div></div></div></div>
      </div>
      <div class="input">Type a new message</div>
      <div class="ctools">
        <svg width="22" height="22" viewBox="0 0 22 22"><path d="M1.500 12.500L5.500 1.500l3.800 8M3 8.500h5M7 20.500l.8-4L17.500 6.800a2 2 0 0 1 3 3L10.800 19.500z" fill="none" stroke="currentColor" stroke-width="1.200"/></svg>
        <svg width="22" height="22" viewBox="0 0 22 22"><path d="M11 1.500c2.200 0 3.500 1.500 3.200 3.600l-1.400 7.600c-.3 1.600-3.300 1.600-3.600 0L7.800 5.100C7.500 3 8.800 1.500 11 1.500z" fill="none" stroke="currentColor" stroke-width="1.200"/><circle cx="11" cy="18.500" r="2" fill="none" stroke="currentColor" stroke-width="1.200"/></svg>
        <svg width="22" height="22" viewBox="0 0 22 22"><path d="M4.500 12.500l8.800-9c2.300-2.300 7 .8 4.700 4.500L8.500 18.500c-2.500 2.500-6-.8-3.800-3.500l7.800-8c1.300-1.200 3 .2 2 1.700l-6.500 6.800" fill="none" stroke="currentColor" stroke-width="1.200"/></svg>
        <svg width="22" height="22" viewBox="0 0 22 22"><path d="M1.800 19.500V11a9 8.800 0 1 1 9 8.500zM7 18v-6.500a4 4 0 1 1 4 4H8.500" fill="none" stroke="currentColor" stroke-width="1.300"/><circle cx="11" cy="11" r="1.200" fill="none" stroke="currentColor"/></svg>
        <svg width="22" height="22"><use href="#i-smile"/></svg>
        <svg width="22" height="22"><use href="#i-dots"/></svg>
        <svg class="send" width="22" height="22" viewBox="0 0 22 22"><path d="M1.500 1.500L20.500 11l-19 9.500L4 11zM4 11h9" fill="none" stroke="currentColor" stroke-width="1.200" stroke-linejoin="round"/></svg>
      </div>
    </aside>
  </div>
</div>

<footer class="taskbar">
  <div class="a start"><svg width="35" height="35"><use href="#i-win"/></svg></div>
  <div class="pill"><svg width="21" height="21"><use href="#i-find"/></svg>Search</div>
  <div class="a"><svg width="36" height="34"><defs><linearGradient id="tv" x1="0" y1="0" x2="0" y2="1"><stop offset="0" stop-color="#484848"/><stop offset="1" stop-color="#161616"/></linearGradient></defs><rect x="0" y="9" width="27" height="25" rx="1" fill="url(#tv)"/><rect x="9" y="0" width="27" height="24" rx="1" fill="#fafafa"/><rect x="9" y="9" width="18" height="15" fill="#bcbcbc"/></svg></div>
  <div class="a dot"><svg width="36" height="34"><use href="#i-folder"/></svg></div>
  <div class="a dot"><svg width="36" height="34"><ellipse cx="16" cy="17" rx="16" ry="16" fill="#f7941e"/><circle cx="20" cy="17" r="17" fill="#dbdde9"/><circle cx="20" cy="17" r="16" fill="#2c2255"/><path d="M4.300 13h31.400M4.300 17h31.400M4.300 21h31.400" stroke="#fff" stroke-width="2"/></svg></div>
  <div class="a dot"><svg width="36" height="36" viewBox="0 0 36 36"><path d="M14 1h8l1.500 5 3.500 2 5-1.200 4 7-3.500 3.700v1l3.500 3.700-4 7-5-1.200-3.500 2L22 35h-8l-1.500-5-3.500-2-5 1.200-4-7 3.500-3.700v-1L0 13.800l4-7L9 8l3.500-2z" fill="#75808c"/><circle cx="18" cy="18" r="9" fill="#f2f4f7"/><circle cx="18" cy="18" r="6.200" fill="#0a64c0"/></svg></div>
  <div class="a dot"><svg width="34" height="34" viewBox="0 0 34 34"><rect width="34" height="34" rx="5" fill="#b30b00"/><path d="M7.500 24.500c-1.500-2.500 4-5.500 8-6.500s11-2 11.500 1-5.500 1.500-8-1-5-8-3-10 3.500.5 2 5c-1 3.500-6.500 14.500-10.500 11.500z" fill="none" stroke="#fff" stroke-width="1.800"/></svg></div>
  <div class="a dot"><svg width="36" height="36"><use href="#i-spring"/></svg></div>
  <div class="a dot"><svg width="34" height="30" viewBox="0 0 34 30"><rect x="1" y="2" width="32" height="26" fill="#fff" stroke="#000" stroke-width="2"/><rect x="5" y="6" width="14" height="18" fill="#000"/><path d="M8.500 10h7L11 21" stroke="#fff" stroke-width="3" fill="none"/><path d="M21.500 13h6.500l-6.500 9h7" stroke="#000" stroke-width="2.200" fill="none"/></svg></div>
  <div class="a dot red tile"><svg width="35" height="36" viewBox="0 0 35 36"><circle cx="17.500" cy="18" r="16.500" fill="#e3e9ea" stroke="#8ea2b2" stroke-width="1.200"/><path d="M1.500 20C5 12 11 9.500 18 11c-1 4-4 8-9 10 2-4 2-6 0-7-3 0-6 3-7.500 6z" fill="#55a81e"/><path d="M9 4.500C15 .5 24 1.500 29 7c-4-2-8-2-10 0-3 2-6 0-10-2.500z" fill="#55a81e"/><path d="M19 10c5 1 6 4 5 8-1 5 0 9 3 12l-4 3c-4-5-4-9-2.500-14C22 15 21.500 12 19 10z" fill="#2b9bd6"/><path d="M17 16c2 5 8 7 16.500 4.500-1 3-2 4.500-3.500 6C22 27 17 23 17 16z" fill="#2b9bd6"/></svg></div>
  <div class="a dot"><svg width="37" height="37" viewBox="0 0 37 37"><path d="M18.500 18.500L2.500 9.200A18.500 18.500 0 0 1 34.500 9.200z" fill="#e33b2e"/><path d="M18.500 18.500L2.500 9.200A18.500 18.500 0 0 0 18.500 37L26.500 23z" fill="#2ba24c"/><path d="M18.500 9.200h16A18.500 18.500 0 0 1 18.500 37l8-13.800z" fill="#fcc31e"/><path d="M18.500 9.200h-16l4 7z" fill="#e33b2e"/><circle cx="18.500" cy="18.500" r="9" fill="#fff"/><circle cx="18.500" cy="18.500" r="7" fill="#2f7df0"/></svg></div>
  <div class="a dot"><svg width="30" height="37" viewBox="0 0 30 36"><use href="#i-note"/></svg></div>
  <div class="a dot"><svg width="36" height="36" viewBox="0 0 36 33"><path d="M9 0h25a2 2 0 0 1 2 2v7H8V1z" fill="#41a5ee"/><path d="M8 8.500h28v8.500H8z" fill="#2b7cd3"/><path d="M8 17h28v8H8z" fill="#185abd"/><path d="M8 25h28v6a2 2 0 0 1-2 2H10a2 2 0 0 1-2-2z" fill="#103f91"/><rect y="8" width="18" height="18" rx="2" fill="#185abd"/><text x="9" y="22.500" class="svg-letter w">W</text></svg></div>
  <div class="a dot"><svg width="34" height="29" viewBox="0 0 34 29"><rect x=".5" y=".5" width="33" height="28" rx="1.500" fill="#d0d3d8" stroke="#8c8f94"/><rect x="1.500" y="4.500" width="31" height="23" fill="#000"/><text x="3" y="12" class="cmdtxt">C:\_</text></svg></div>
  <div class="a dot"><svg width="38" height="38" viewBox="0 0 38 38"><rect x="0" y="0" width="27" height="28" rx="3" fill="#f3f5f8"/><path d="M4 6h16" stroke="#d8400b" stroke-width="4" stroke-dasharray="4 2"/><path d="M5 6v14" stroke="#d8400b" stroke-width="4" stroke-dasharray="4 2"/><path d="M20 8v20M10 23h20" stroke="#8f979f" stroke-width="3.500"/><circle cx="19.500" cy="33" r="3.200" fill="none" stroke="#1a9be0" stroke-width="2.600"/><circle cx="33" cy="20" r="3.200" fill="none" stroke="#1a9be0" stroke-width="2.600"/></svg></div>
  <div class="a dot red wide stack"><svg width="36" height="33"><use href="#i-teams"/><text x="9" y="22" class="svg-letter">T</text></svg><i class="one">1</i></div>
  <div class="a dot red stack"><svg width="36" height="33" viewBox="0 0 36 33"><rect x="10" y="0" width="24" height="20" fill="#0a5fb0"/><rect x="22" y="6" width="12" height="10" fill="#28a8ea"/><path d="M9 14l13.500 8L36 14v17a2 2 0 0 1-2 2H11a2 2 0 0 1-2-2z" fill="#1490df"/><path d="M36 15L12 33h22a2 2 0 0 0 2-2z" fill="#28a8ea"/><rect y="7" width="18" height="18" rx="2" fill="#0f6cbd"/><text x="9" y="21.500" class="svg-letter w">O</text></svg><svg class="env" width="23" height="17"><rect width="23" height="17" fill="#e8b36a"/><path d="M1 1l10.500 9L22 1" fill="none" stroke="#fff" stroke-width="1.800"/></svg></div>
  <div class="tray">
    <svg class="tc" width="20" height="20"><use href="#i-up"/></svg>
    <svg class="od" width="24" height="16" viewBox="0 0 24 16"><path d="M7 6A6.500 6.500 0 0 1 19 5l-5 5z" fill="#0a64b8"/><path d="M6 15a5 5 0 0 1-1-9.800A6 6 0 0 1 10 5l8 5-6 5z" fill="#1080d8"/><path d="M4 15l12-8.500a5 5 0 0 1 3-1A4.800 4.800 0 0 1 19 15z" fill="#28a8ea"/></svg>
    <div class="mict"><svg width="25" height="25" viewBox="0 0 25 25"><rect x="9" y="1.500" width="7" height="13" rx="3.500" fill="none" stroke="#222" stroke-width="1.500"/><path d="M5 11c0 10 15 10 15 0M12.500 18.500v5.500M1 1.500l23 22" fill="none" stroke="#222" stroke-width="1.500"/></svg></div>
    <svg class="ic" width="24" height="20"><use href="#i-wifi"/></svg>
    <svg class="ic" width="24" height="20"><use href="#i-spk"/></svg>
    <svg class="ic" width="26" height="20"><use href="#i-bat"/></svg>
    <div class="clock"><span class="ct">16:57</span><span>08-02-2023</span></div>
    <div class="badge">16</div>
  </div>
</footer>
</body>
</html>
```
FILE: styles.css
```css
* { box-sizing: border-box; }
body { margin: 0; width: 1920px; height: 1080px; overflow: hidden; background: #b0b0b1; font-family: "Open Sans", "Noto Sans", sans-serif; display: flex; flex-direction: column; }
i, em { font-style: normal; }
b { font-weight: 600; }
svg { flex: none; display: block; }
.defs { width: 0; height: 0; position: absolute; }
.svg-letter { font: 700 16px "Open Sans", sans-serif; fill: #fff; text-anchor: middle; }
.svg-letter.w { font-size: 15px; }
.svg-letter.sm { font-size: 9px; }
.cmdtxt { font: 700 7px "DejaVu Sans Mono", monospace; fill: #ddd; }

/* meeting window */
.window { margin: 2px 3px 0 2px; height: 1004px; border-radius: 8px 10px 10px 0; overflow: hidden; background: #1f1f1f; color: #fff; display: flex; flex-direction: column; flex: none; }
.titlebar { height: 46px; background: #0a0a0a; display: grid; grid-template-columns: 1fr auto 1fr; align-items: center; }
.title { grid-column: 2; font-size: 16px; line-height: 44px; padding-bottom: 1px; }
.winbtns { display: flex; justify-content: flex-end; gap: 34px; padding: 0 14px 4px 0; }
.toolbar { height: 76px; border-top: 1px solid #000; background: #292929; display: flex; justify-content: space-between; }
.status { display: flex; align-items: center; padding-left: 23px; }
.rec { margin-left: 20px; }
.timer { font-size: 16px; color: #d6d6d6; margin-left: 15px; padding-top: 2px; }
.actions { display: flex; color: #d6d6d6; padding-right: 22px; }
.act { width: 70px; display: grid; grid-template-rows: 56px 20px; justify-items: center; align-items: center; font-size: 12.700px; line-height: 16px; white-space: nowrap; }
.act span { margin-top: -20px; }
.take { width: 80px; }
.pop { width: 76px; }
.on svg { color: #fff; }
.sep { width: 1px; height: 39px; background: #4d4d4d; margin: 17px 10px 0 7px; }
.sep2 { margin: 17px 10px 0 10px; }
.leave { width: 115px; height: 40px; margin: 17px 0 0 13px; border-radius: 5px; background: #d13438; color: #fff; display: flex; align-items: center; justify-content: center; gap: 11px; padding: 2px 0 0 1px; font-size: 16px; }

.content { flex: 1; display: flex; min-height: 0; }
.left { width: 1519px; display: flex; flex-direction: column; flex: none; }
.roster { height: 174px; display: flex; padding-left: 54.500px; overflow: hidden; }
.person { width: 137.500px; padding-top: 26px; display: flex; flex-direction: column; align-items: center; flex: none; }
.av { width: 88px; height: 88px; border-radius: 50%; display: grid; place-items: center; font-size: 32px; font-weight: 600; line-height: 40px; letter-spacing: -.3px; position: relative; box-shadow: 0 3px 6px rgba(0,0,0,.3); }
.nm { width: 116px; height: 24px; margin-top: 13px; display: flex; justify-content: space-between; align-items: center; font-size: 14px; line-height: 24px; white-space: nowrap; }
.nm svg { margin: -1px 1px 0 0; }
.blue { background: #c7d3e7; color: #002050; }
.rose { background: #f4d8d9; color: #7b2b36; }
.pink { background: #f5d3df; color: #6e1538; }
.sand { background: #f7e8cd; color: #80550f; }
.mint { background: #d1ebde; color: #1a5b37; }
.gold { background: #fdedc9; color: #835b00; }
.speaking .av { outline: 4px solid #7f85f5; outline-offset: 2.500px; box-shadow: 0 0 80px 22px rgba(98,100,190,.26); }
.speaking .nm, .more .nm { justify-content: center; z-index: 1; }
.more { padding-top: 23px; }
.more .nm { margin-top: 12px; }
.more .av { background: #464543; border: 1px solid #6b6a68; font-size: 16px; font-weight: 400; letter-spacing: 0; }
.self { width: 295px; height: 164px; margin: 6px 0 0 62.500px; background: #333; display: grid; place-items: center; flex: none; }
.vn { width: 71px; height: 71px; border-radius: 50%; background: #d9d6e9; color: #241d52; display: grid; place-items: center; font-size: 28px; font-weight: 500; letter-spacing: .3px; }

/* shared screen */
.stage { width: 1508px; height: 705px; margin-left: 4px; background: #000; padding-left: 125px; position: relative; }
.sharer { position: absolute; left: 18px; bottom: 15px; font-size: 14px; line-height: 20px; }
.screen { width: 1259px; height: 705px; background: #f3f3f3; color: #444; display: flex; flex-direction: column; font-size: 9.400px; overflow: hidden; }
.tabs { height: 24px; background: #cfcecd; display: flex; flex: none; }
.tabmenu { width: 39px; display: grid; place-items: center; border-right: 1px solid #8d8d8d; margin: 4px 0 4px; }
.tab { width: 95.100px; padding: 0 0 1px 9px; display: flex; align-items: center; border-right: 1px solid #8d8d8d; margin: 4px 0; color: #333; flex: none; }
.tab span { width: 42px; margin-left: 8px; white-space: nowrap; line-height: 14px; font-size: 9.200px; letter-spacing: -.1px; }
.tab .fade { -webkit-mask: linear-gradient(90deg, #000 70%, rgba(0,0,0,.15)); mask: linear-gradient(90deg, #000 70%, rgba(0,0,0,.15)); }
.tab.dim span { color: #666; }
.tab > svg:first-child { width: 13px; }
.tab.dim > svg { color: #777; }
.tab.green > svg { color: #6f9f8b; }
.tab .cx { color: #333 !important; margin-left: 7px; }
.bing { color: #5b8ec9 !important; }
.tab.active { background: #f9f9f9; margin: 0; border: 0; }
.tab.last { width: 95px; }
.newtab { margin: 5px 0 0 9px; }
.bwin { margin: 6px 15px 0 auto; display: flex; gap: 29px; color: #333; }
.addr { height: 32px; background: #f8f8f8; display: flex; align-items: center; flex: none; }
.back { margin-left: 16px; }
.reload { margin-left: 22px; }
.url { width: 980px; height: 26px; margin: 0 0 2px 19px; background: #fff; display: flex; align-items: center; padding: 2px 2px 0 12px; font-size: 10.940px; color: #666; border-radius: 5px; }
.url span { margin-left: 12px; line-height: 16px; }
.url b { font-weight: 400; color: #222; }
.read { margin: 0 15px 0 auto; }
.tools { flex: 1; display: flex; align-items: center; justify-content: space-between; padding: 0 17px 0 15px; color: #333; }
.browser { flex: 1; display: flex; min-height: 0; }
.page { width: 1207px; background: linear-gradient(90deg, #f4f4f8 75px, #f3f3f3 75px); display: flex; flex-direction: column; }
.snav { height: 25px; background: #262626; color: #ddd; display: flex; align-items: center; font-size: 10.300px; padding-left: 79px; white-space: nowrap; flex: none; }
.logo { width: 84.500px; display: flex; align-items: center; font-size: 13px; letter-spacing: -.55px; color: #fff; }
.logo b { font-weight: 700; }
.logo svg { margin: -8px 0 0 -5px; }
.n1 { width: 54.500px; } .n2 { width: 45px; } .n3 { width: 42px; } .n4 { width: 90px; } .n5 { width: 80px; }
.find { width: 254px; height: 20px; margin-left: auto; background: #fff; color: #777; display: flex; align-items: center; gap: 5px; padding-left: 5px; font-size: 10px; }
.q { width: 12px; height: 12px; border-radius: 50%; background: #4b9fd5; color: #fff; font-size: 9.500px; font-weight: 700; line-height: 12px; text-align: center; flex: none; }
.q.w { background: #fff; color: #262626; margin: 0 9px 0 9px; }
.q.g { background: #c4c4c4; margin-left: 6px; }
.usr { width: 19px; height: 20px; background: #9fe5b5; color: #234; display: grid; place-items: center; margin-right: 79px; font-size: 10px; }
.phead { height: 66px; flex: none; }
.prow { height: 34px; display: flex; align-items: center; padding-left: 79px; color: #777; }
.pic { margin-left: 8px; margin-top: -1px; }
.pname { font-size: 12.050px; font-weight: 400; margin-left: 4px; color: #333; -webkit-text-stroke: .25px #333; }
.br { width: 1px; height: 9px; background: #ccc; margin: 0 10px 0 19px; }
.master { font-size: 9.200px; }
.date { margin: -2px 0 0 auto; font-size: 9.300px; }
.ver { margin: -2px 75px 0 8px; font-size: 9.100px; }
.ptabs { display: flex; height: 20px; padding-left: 79px; font-size: 9.900px; color: #555; line-height: 18px; }
.ptabs a { flex: none; }
.t1 { width: 60px; } .t2 { width: 44px; } .t3 { width: 46px; margin-right: 15px; } .t4 { width: 42px; } .t5 { width: 50px; }
.ptabs .cur { border-bottom: 2px solid #4b9fd5; }
.car { display: inline-block; border: 3px solid transparent; border-top: 4px solid currentColor; border-bottom: 0; margin: 0 0 1px 3px; }
.cols { flex: 1; display: flex; }
.side { width: 308px; padding-left: 76.500px; color: #333; }
.po { height: 28px; line-height: 28px; padding-left: 6.500px; font-size: 9.600px; margin-bottom: 5px; }
.facet { height: 26.400px; display: flex; align-items: center; padding-left: 3px; font-size: 10.500px; -webkit-text-stroke: .15px #333; }
.facet svg { margin-right: 3px; }
.facet.open { margin-bottom: -1px; }
.facet.open svg { transform: rotate(90deg); margin: 1px 4px 0 -1px; }
.facet .q { margin-left: 7px; -webkit-text-stroke: 0; }
.it { height: 20.400px; display: flex; align-items: center; justify-content: space-between; width: 214px; padding: 0 8px 0 5.500px; font-size: 9.300px; color: #555; border: 1px solid transparent; border-width: 0 1px; }
.it.top svg { margin-right: -5px; }
.it.gr { color: #888; }
.it.sub { padding-left: 17.500px; }
.it span { color: #777; }
.it.sel { background: #c6e0f6; border: 1px solid #8abce4; }
.it.last { margin-bottom: 9px; }
.main { width: 899px; }
.mbar { height: 33px; display: flex; align-items: center; padding: 0 79px 9px 16px; color: #555; }
.mname { font-size: 10.200px; }
.dd { width: 41px; height: 20px; background: #fff; border: 1px solid #ddd; margin-left: 6px; display: flex; align-items: center; padding-left: 7px; gap: 6px; }
.dd .car { color: #999; }
.keys { margin-left: auto; display: flex; align-items: center; color: #777; font-size: 9.300px; }
kbd { font: 9px "DejaVu Sans", sans-serif; width: 19px; height: 20px; border: 1px solid #e4e4e4; border-bottom: 2px solid #d8d8d8; background: #f7f7f7; display: grid; place-items: center; margin-right: 4px; }
.k1 { margin-right: 13px; }
.k2 { margin: 0 32px 0 0; }
.cnt { color: #444; font-size: 10px; }
.cnt b { font-weight: 600; }
.panel { height: 377px; background: #fff; padding-left: 17px; }
.prow1 { height: 57px; padding-bottom: 2px; display: flex; align-items: center; font-size: 10.100px; width: 802px; color: #666; }
.prow1 > span { margin-left: -1px; }
.prow1 b { margin-left: 7px; font-size: 9.800px; font-weight: 400; color: #333; -webkit-text-stroke: .2px #333; }
.gbtn { width: 25px; height: 17px; border: 1px solid #4b84ab; border-radius: 2px; display: grid; place-items: center; margin: -1px 0 0 7px; }
.leak { width: 181px; height: 21px; line-height: 21px; margin-left: auto; background: #fbf1d3; text-align: center; font-size: 10px; color: #555; }
.thead { height: 34.500px; width: 802px; padding-top: 1px; border-bottom: 1px solid #e3e3e3; display: grid; grid-template-columns: 1fr 80px 63px 63.500px; padding-right: 8px; text-align: right; line-height: 13.600px; font-size: 9.300px; color: #555; }
.rows { padding-top: 5px; width: 802px; }
.r { height: 26.900px; display: grid; grid-template-columns: 1fr 80px 63px 63.500px; padding-right: 8px; align-items: center; text-align: right; font-size: 9.700px; position: relative; color: #444; }
.r > div { display: flex; align-items: center; text-align: left; padding-left: 8px; gap: 4px; color: #777; letter-spacing: -.16px; }
.r b { font-weight: 400; color: #2c6590; letter-spacing: .12px; }
.r.sel { background: #d9eafa; }
.r.alt { background: #f6f6f8; }
.r.hov { background: #ebf5ff; }
.cursor { position: absolute; left: 243px; top: 22px; z-index: 2; }
.shown { width: 800px; text-align: center; font-size: 9.400px; color: #777; line-height: 14px; margin-top: 5.500px; }
.warn { width: 818px; height: 58px; margin: 9px 0 0 7px; background: #f8dfdf; border: 1px solid #f6d5d5; border-radius: 2px; color: #a5494b; text-align: center; font-size: 9.340px; line-height: 15.500px; padding-top: 5px; white-space: nowrap; }
.w1 { font-size: 11.440px; line-height: 17px; }
.foot { width: 818px; margin: 6.500px 0 0 0; text-align: center; color: #777; font-size: 9.410px; line-height: 14.500px; white-space: nowrap; }
.foot u { text-decoration: none; color: #444; border-bottom: 1px solid #c5c5c5; }
.f2 { font-size: 9.540px; line-height: 14.500px; }
.scroll { width: 14px; background: #f1f1f1; border-right: 1px solid #ddd; display: flex; flex-direction: column; justify-content: space-between; align-items: center; padding: 7px 0 6px; }
.su, .sd { border: 3px solid transparent; border-bottom: 4px solid #999; border-top: 0; }
.sd { border-bottom: 0; border-top: 4px solid #999; }
.rail { flex: 1; background: #f7f6fb; display: flex; flex-direction: column; align-items: center; padding: 10px 0 0 0; gap: 19px; }
.plus { margin-top: 5px; }
.rl { width: 22px; height: 1px; background: #ccc; margin: auto 0 -7px; }
.gear { margin: 3px 0 12px; }
.stask { height: 38px; background: #1e1e20; border-top: 1px solid #444; color: #eee; display: flex; align-items: center; flex: none; }
.weather { width: 334px; display: flex; padding: 0 0 2px 17px; gap: 5px; align-items: center; font-size: 9.400px; line-height: 13px; }
.s { width: 36px; height: 37px; display: grid; place-items: center; position: relative; }
.run::after { content: ""; position: absolute; bottom: 4px; width: 5px; height: 2px; border-radius: 1px; background: #aaa; }
.edge { background: #29292c; border-radius: 4px; }
.sfind { width: 75px; height: 28px; border-radius: 14px; margin: 0 6px 0 7px; background: #262628; display: flex; align-items: center; justify-content: center; gap: 5px; font-size: 9.500px; }
.b9 { position: absolute; right: 4px; top: 4px; width: 12px; height: 12px; border-radius: 50%; background: #c72c48; font-size: 8px; line-height: 12px; text-align: center; }
.stray { margin-left: auto; display: flex; align-items: center; padding-right: 16px; }
.stray .c { margin: 0 3px 0 7px; color: #ddd; }
.smic { width: 26px; height: 33px; background: #4aa8ee; border-radius: 3px; display: grid; place-items: center; }
.lang { width: 38px; text-align: center; font-size: 9.500px; line-height: 14px; }
.sw { margin: 0 3px; }
.stime { width: 50px; text-align: right; font-size: 9.600px; line-height: 13.500px; padding-bottom: 1px; }
.bell { margin-left: 10px; }

/* chat pane */
.chat { flex: 1; border-left: 1px solid #101010; display: flex; flex-direction: column; background: #1f1f1f; }
.chead { height: 75px; border-bottom: 1px solid #0e0e0e; display: flex; justify-content: space-between; align-items: center; padding: 7px 34px 0 24px; font-size: 19.400px; flex: none; }
.chead b { font-weight: 700; }
.chead svg { margin-top: -4px; color: #ddd; }
.msgs { height: 702px; overflow: hidden; padding-left: 38px; flex: none; }
.bub { background: #292929; border-radius: 5px; padding: 13px 20px; font-size: 16.600px; line-height: 25px; }
.plain { padding: 7px 20px 8px; margin-left: 28px; height: 40px; white-space: nowrap; font-size: 16.500px; }
.first { margin-top: -20px; width: 249px; border-radius: 0 5px 5px 0; }
.second { margin-top: 2px; width: 163px; border-radius: 0 0 5px 5px; }
.msg { display: flex; margin-top: 20px; }
.mav { width: 40px; height: 40px; margin: 13px -12px 0 0; border-radius: 50%; display: grid; place-items: center; font-size: 14px; font-weight: 600; letter-spacing: -.3px; position: relative; z-index: 1; }
.mav i { position: absolute; right: -2px; bottom: -2px; width: 17px; height: 17px; border-radius: 50%; background: #c4314b; border: 2.500px solid #1f1f1f; }
.b1 { width: 259px; height: 74px; }
.b2 { width: 203px; height: 74px; }
.b3 { width: 263px; }
.who { display: flex; gap: 16px; font-size: 14px; line-height: 20px; color: #d0d0d0; margin-top: 2px; }
.who b { font-weight: 700; font-size: 13.900px; letter-spacing: -.15px; white-space: nowrap; }
.who span { color: #adadad; }
.bub p { margin: 3px 0 0; white-space: nowrap; }
.b1, .b2, .b3 { padding-bottom: 11px; }
.lnk { color: #7f85f5; font-size: 16.400px; }
.lnk u { text-underline-offset: 2px; }
.card { display: flex; width: 223px; height: 125px; margin: 6px 0 9px; background: #212121; border-radius: 4px; overflow: hidden; }
.thumb { width: 150px; height: 120px; background: #cbcbcb; display: grid; place-items: center; border-radius: 4px 0 0 4px; }
.ctext { flex: 1; background: #242424; padding: 14px 0 0 14px; display: flex; flex-direction: column; font-size: 14px; line-height: 20px; }
.ctext b { font-size: 16.600px; line-height: 20px; font-weight: 700; margin-bottom: 2px; }
.ctext em { color: #999; }
.input { width: 324px; height: 54px; margin: 1px 0 0 37px; border: 1px solid #0c0c0c; border-radius: 5px; background: #292929; padding: 3px 0 0 15px; line-height: 48px; font-size: 16.450px; flex: none; }
.ctools { display: flex; align-items: center; padding: 0 43px 0 46px; height: 42px; gap: 18px; color: #c8c8c8; }
.send { margin-left: auto; }

/* host taskbar */
.taskbar { height: 74px; border-top: 2px solid #aaa8ac; background: linear-gradient(#d9dae6, #dbdde9); display: flex; padding-left: 277px; flex: none; align-items: center; }
.a { width: 66px; height: 72px; display: grid; place-items: center; position: relative; flex: none; padding-top: 1px; }
.pill { width: 146px; height: 44px; margin: 1px 6px 0 8px; padding-right: 0; border-radius: 22px; background: #f3f4f8; box-shadow: 0 1px 2px rgba(0,0,0,.12); display: flex; align-items: center; justify-content: center; gap: 8px; font-size: 17px; color: #222; }
.a::after { content: none; position: absolute; bottom: 6px; left: 28.500px; width: 9px; height: 5px; border-radius: 3px; background: #7d7e84; }
.dot::after { content: ""; }
.red::after { background: #c42b1c; }
.wide::after { width: 24px; left: 21px; }
.tile::before { content: ""; position: absolute; inset: 7px 3px 5px; background: #fde5e6; border-radius: 6px; }
.stack::before { content: ""; position: absolute; inset: 7px 3px 5px; background: linear-gradient(90deg, #fde5e6 50px, #f1dce2 50px, #f1dce2 52px, #fde5e6 52px); border-radius: 6px; }
.tile svg, .stack svg { z-index: 1; }
.one { position: absolute; z-index: 2; left: 39px; top: 17px; width: 20px; height: 20px; border-radius: 50%; background: #cc1236; color: #fff; font-size: 15px; line-height: 20px; text-align: center; }
.env { position: absolute; left: 37px; top: 20px; z-index: 2; }
.tray { display: flex; align-items: center; padding-left: 28px; height: 72px; color: #222; flex: 1; }
.od { margin-left: 14px; }
.mict { width: 44px; height: 56px; margin-left: 8px; background: #f0f1f6; border-radius: 5px; box-shadow: 0 1px 1px rgba(0,0,0,.12); display: grid; place-items: center; }
.ic { margin-left: 11px; }
.mict + .ic { margin-left: 14px; }
.clock { width: 112px; margin-left: 3px; display: flex; flex-direction: column; align-items: flex-end; font-size: 17.300px; line-height: 23px; color: #1c1c1c; letter-spacing: .15px; }
.clock .ct { letter-spacing: -.5px; font-size: 17px; }
.badge { width: 30px; height: 24px; border-radius: 12px; background: #0078d4; color: #fff; margin-left: 9px; font-size: 15px; line-height: 24px; text-align: center; }
```
